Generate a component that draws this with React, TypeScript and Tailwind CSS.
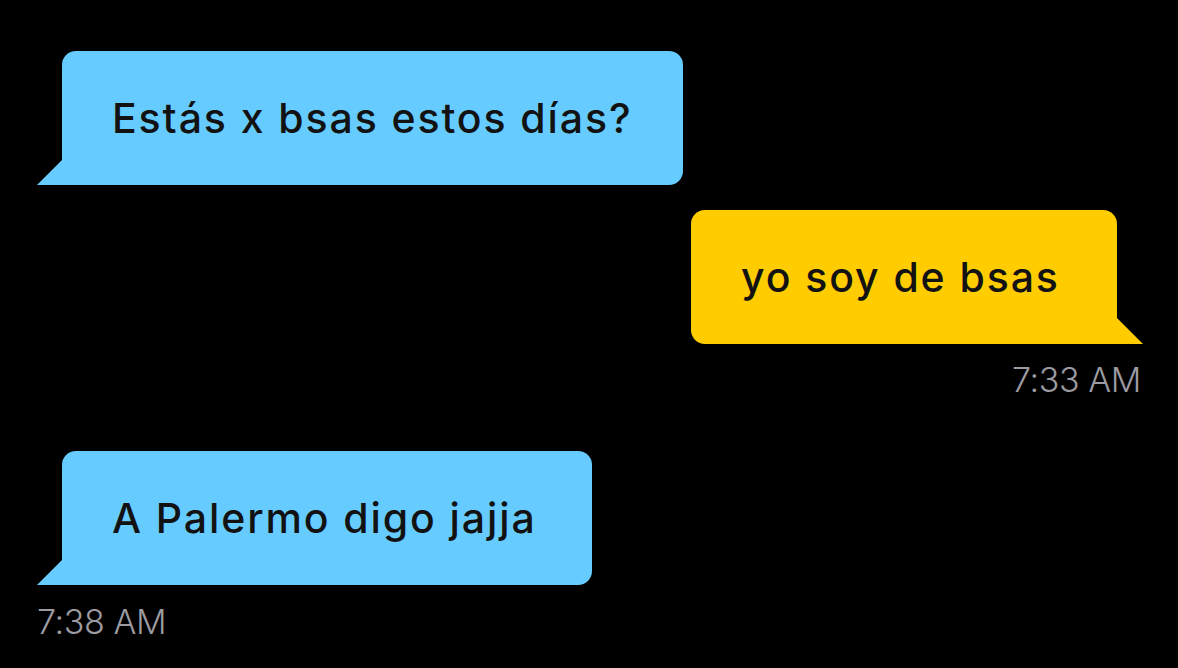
import React from 'react';

const FONT = { fontFamily: 'Inter, "Noto Sans", sans-serif' };

function Tail({ side, color }: { side: 'left' | 'right'; color: string }) {
  // small triangle at the bottom corner of a bubble
  if (side === 'left') {
    return (
      <svg className="absolute bottom-0 -left-[25px]" width="26" height="26" viewBox="0 0 26 26">
        <polygon points="26,0 26,26 0,26" fill={color} />
      </svg>
    );
  }
  return (
    <svg className="absolute bottom-0 -right-[26px]" width="27" height="27" viewBox="0 0 27 27">
      <polygon points="0,0 27,27 0,27" fill={color} />
    </svg>
  );
}

function Bubble({
  text,
  side,
  width,
}: {
  text: string;
  side: 'left' | 'right';
  width: string;
}) {
  const isLeft = side === 'left';
  const color = isLeft ? '#66CCFF' : '#FFCC00';
  return (
    <div
      className={
        'relative flex items-center h-[134px] px-[50px] ' +
        width +
        (isLeft
          ? ' bg-[#66CCFF] rounded-[14px] rounded-bl-none'
          : ' bg-[#FFCC00] rounded-[14px] rounded-br-none')
      }
    >
      <span className="text-[41px] font-medium text-[#121212] leading-none whitespace-nowrap tracking-[1.9px]">
        {text}
      </span>
      <Tail side={side} color={color} />
    </div>
  );
}

export default function App() {
  return (
    <div className="w-[1178px] h-[668px] bg-black overflow-hidden px-[35px] pt-[51px]" style={FONT}>
      <div className="flex flex-col">
        <div className="pl-[27px]">
          <Bubble text="Estás x bsas estos días?" side="left" width="w-[621px]" />
        </div>

        <div className="flex flex-col items-end mt-[25px]">
          <div className="pr-[26px]">
            <Bubble text="yo soy de bsas" side="right" width="w-[426px]" />
          </div>
          <div className="mt-[16px] pr-[2px] text-[34px] font-light text-[#9b9ba1] leading-[40px] tracking-[-0.4px]">
            7:33 AM
          </div>
        </div>

        <div className="mt-[51px] pl-[27px]">
          <Bubble text="A Palermo digo jajja" side="left" width="w-[530px]" />
        </div>
        <div className="mt-[17px] pl-[2px] text-[34px] font-light text-[#9b9ba1] leading-[40px] tracking-[-0.4px]">
          7:38 AM
        </div>
      </div>
    </div>
  );
}
